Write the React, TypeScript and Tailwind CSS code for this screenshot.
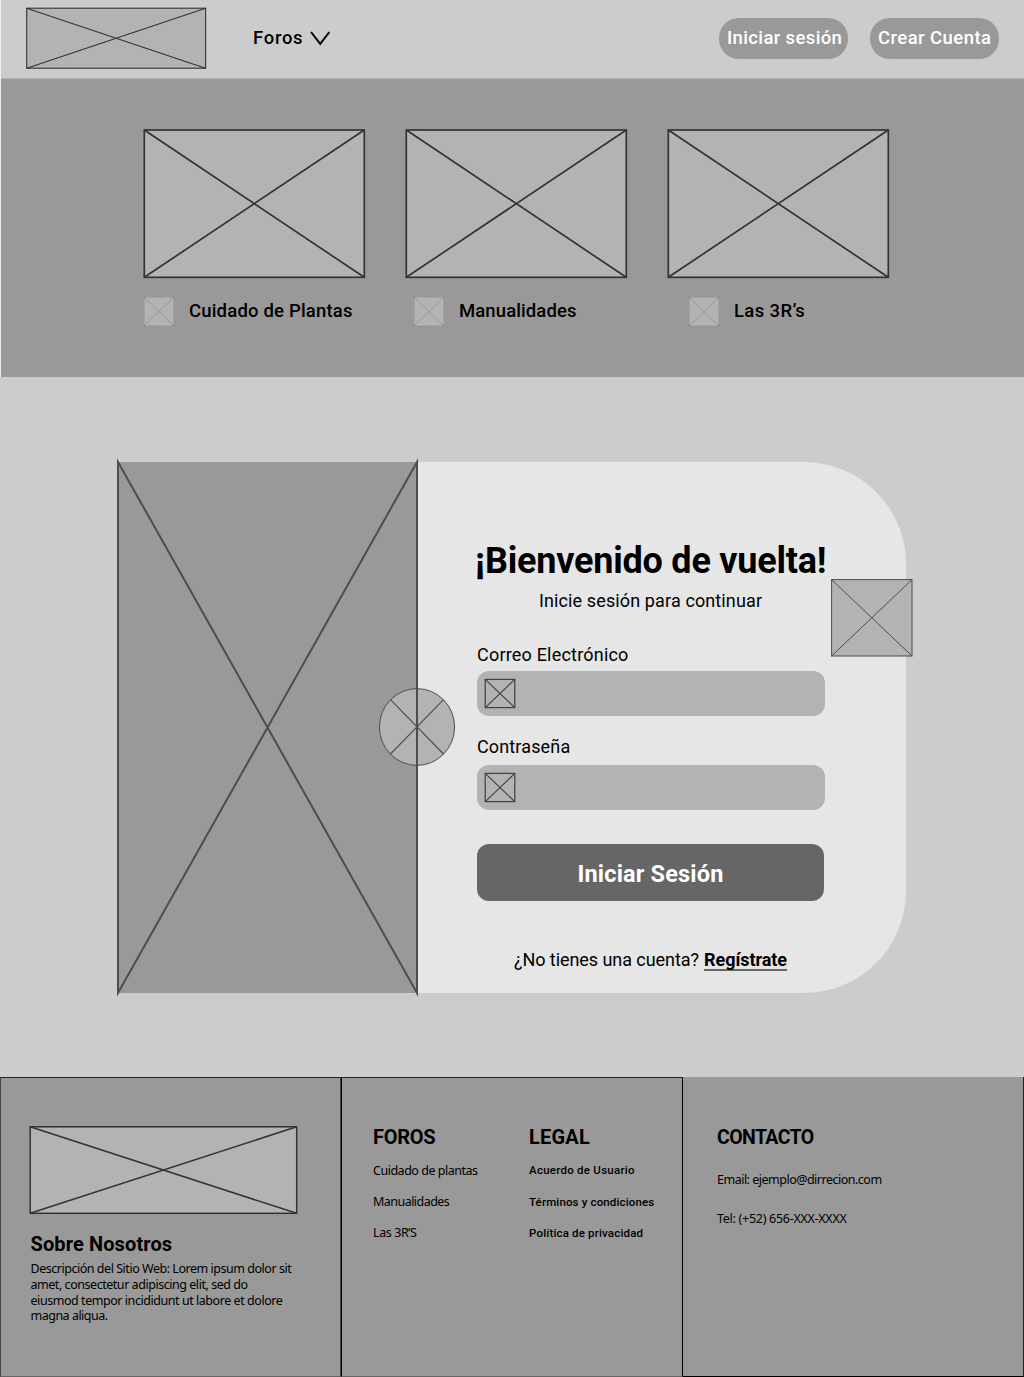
import React from 'react';

type PlaceholderProps = {
  w: number;
  h: number;
  /** Frame edges inside the drawing: left, top, right, bottom. */
  box: [number, number, number, number];
  stroke: string;
  sw: number;
  fill?: string;
  className?: string;
};

function Placeholder({ w, h, box, stroke, sw, fill = '#b3b3b3', className = '' }: PlaceholderProps) {
  const [l, t, r, b] = box;
  return (
    <svg width={w} height={h} viewBox={`0 0 ${w} ${h}`} className={`block shrink-0 ${className}`} aria-hidden="true">
      <rect x={l} y={t} width={r - l} height={b - t} fill={fill} stroke={stroke} strokeWidth={sw} />
      <path d={`M${l} ${t}L${r} ${b}M${r} ${t}L${l} ${b}`} stroke={stroke} strokeWidth={sw} fill="none" />
    </svg>
  );
}

function TopicIcon() {
  return (
    <svg width="30" height="29" viewBox="0 0 30 29" className="block shrink-0" aria-hidden="true">
      <rect width="30" height="29" fill="#b3b3b3" />
      <path d="M.5 .5H29.5V28.5H.5Z" fill="none" stroke="#858585" strokeWidth="0.3" />
      <path d="M.5 .5L29.5 28.5M29.5 .5L.5 28.5" stroke="#808080" strokeWidth="0.5" />
      <path d="M0 0h1v1H0ZM29 0h1v1h-1ZM0 28h1v1H0ZM29 28h1v1h-1Z" fill="#6c6c6c" />
    </svg>
  );
}

function Header() {
  return (
    <header className="flex h-[79px] items-start border-b border-[#b0b0b0] pl-[25px]">
      <Placeholder w={181} h={62} box={[0.7, 1.2, 179.6, 61.2]} stroke="#333333" sw={1.1} className="mt-[7px]" />
      <button className="ml-[46px] mt-[26px] flex h-6 items-start">
        <span className="w-[57px] text-left text-[18.5px] font-medium leading-6 tracking-[0.7px]">Foros</span>
        <svg width="22" height="16" viewBox="0 0 22 16" className="mt-[4px] block" fill="none" aria-hidden="true">
          <path d="M1 2L10.2 13.8L19.4 2" stroke="#000" strokeWidth="2" />
        </svg>
      </button>
      <div className="ml-auto mr-[25px] mt-[18px] flex gap-[22px] text-[18.5px] font-medium leading-6 text-white">
        <button className="flex h-[41px] w-[129px] items-start whitespace-nowrap rounded-[20px] bg-[#999999] pl-[8px] pt-[8px] tracking-[0.36px]">
          Iniciar sesión
        </button>
        <button className="flex h-[41px] w-[129px] items-start whitespace-nowrap rounded-[20px] bg-[#999999] pl-[8px] pt-[8px] tracking-[0.44px]">
          Crear Cuenta
        </button>
      </div>
    </header>
  );
}

function TopicCard() {
  return <Placeholder w={223} h={150} box={[1.3, 1, 221.3, 148.3]} stroke="#333333" sw={1.7} />;
}

function Topics() {
  return (
    <section className="h-[298px] bg-[#999999] pl-[142px] pt-[50px]">
      <div className="flex gap-[39px]">
        <TopicCard />
        <TopicCard />
        <TopicCard />
      </div>
      <div className="ml-px mt-[18px] flex whitespace-nowrap text-[18.5px] font-medium leading-6">
        <div className="flex w-[270px] gap-[15px]">
          <TopicIcon />
          <span className="mt-[2px] tracking-[0.18px]">Cuidado de Plantas</span>
        </div>
        <div className="flex w-[275px] gap-[15px]">
          <TopicIcon />
          <span className="mt-[2px] tracking-[0.1px]">Manualidades</span>
        </div>
        <div className="flex gap-[15px]">
          <TopicIcon />
          <span className="mt-[2px] tracking-[0.36px]">Las 3R’s</span>
        </div>
      </div>
    </section>
  );
}

function InputField() {
  return (
    <div className="flex h-[45px] w-[348px] rounded-[12px] bg-[#b3b3b3] pl-[7px] pt-[7px]">
      <Placeholder w={32} h={31} box={[1.2, 1.4, 30.8, 29.6]} stroke="#404040" sw={1.2} />
    </div>
  );
}

function LoginCard() {
  return (
    <section className="relative ml-[117px] mt-[85px] flex h-[531px] w-[789px]">
      <div className="w-[300px] shrink-0 bg-[#999999]" />
      <div className="h-[531px] flex-1 whitespace-nowrap rounded-r-[102px] bg-[#e6e6e6] pl-[60px] text-[18px] leading-6">
        <h1 className="ml-[-2px] pt-[77px] text-[36px] font-bold leading-[44px] tracking-[-0.22px]">
          ¡Bienvenido de vuelta!
        </h1>
        <p className="ml-[62px] mt-[6px] tracking-[0.12px]">Inicie sesión para continuar</p>
        <label className="mt-[30px] block tracking-[0.2px]">Correo Electrónico</label>
        <div className="mt-[4px]">
          <InputField />
        </div>
        <label className="mt-[19px] block tracking-[0.14px]">Contraseña</label>
        <div className="mt-[6px]">
          <InputField />
        </div>
        <button className="mt-[34px] block h-[57px] w-[347px] rounded-[12px] bg-[#666666] text-[23.5px] font-bold leading-[60px] tracking-[0.18px] text-white">
          Iniciar Sesión
        </button>
        <p className="ml-[37px] mt-[47px] flex">
          <span className="w-[190px] tracking-[-0.06px]">¿No tienes una cuenta?</span>
          <a className="h-[23px] border-b-2 border-[#666666] font-bold tracking-[-0.05px]">Regístrate</a>
        </p>
      </div>
      <svg
        width="344"
        height="542"
        viewBox="0 0 344 542"
        className="absolute left-[-2px] top-[-5px]"
        fill="none"
        stroke="#4d4d4d"
        aria-hidden="true"
      >
        <ellipse cx="302" cy="270" rx="37.6" ry="38.4" fill="#b3b3b3" strokeWidth="1" />
        <path d="M275.5 242.7L328.5 297M328.5 242.7L275.5 297" strokeWidth="1.1" />
        <path d="M3 5V536L302 5V536Z" strokeWidth="2" strokeMiterlimit="10" />
      </svg>
      <Placeholder
        w={83}
        h={79}
        box={[0.6, 0.6, 81, 77]}
        stroke="#4d4d4d"
        sw={1}
        className="absolute left-[714px] top-[117px]"
      />
    </section>
  );
}

function Footer() {
  return (
    <footer className="flex h-[300px] whitespace-nowrap bg-[#999999] font-['Noto_Sans',sans-serif] text-[12.5px] leading-4">
      <div className="w-[341px] border border-b-[#666666] border-l-[#444444] border-r-[#444444] border-t-[#222222] pl-[28px] pt-[48px]">
        <Placeholder w={269} h={89} box={[1.2, 0.8, 267.7, 87.3]} stroke="#333333" sw={1.5} />
        <h2 className="ml-[1.5px] mt-[17px] font-[Roboto,sans-serif] text-[20px] font-bold leading-6 tracking-[0.12px]">
          Sobre Nosotros
        </h2>
        <p className="ml-[1.5px] mt-[5px] leading-[15.75px]">
          <span className="block tracking-[-0.47px]">Descripción del Sitio Web: Lorem ipsum dolor sit</span>
          <span className="block tracking-[-0.46px]">amet, consectetur adipiscing elit, sed do</span>
          <span className="block tracking-[-0.45px]">eiusmod tempor incididunt ut labore et dolore</span>
          <span className="block tracking-[-0.5px]">magna aliqua.</span>
        </p>
      </div>
      <div className="flex w-[342px] border border-b-[#666666] border-l-black border-r-black border-t-[#222222] pl-[31px] pt-[47px]">
        <div className="w-[155px]">
          <h2 className="font-[Roboto,sans-serif] text-[20px] font-bold leading-6 tracking-[-0.25px]">FOROS</h2>
          <ul className="mt-[14px] flex flex-col gap-[15px]">
            <li className="tracking-[-0.48px]">Cuidado de plantas</li>
            <li className="tracking-[-0.53px]">Manualidades</li>
            <li className="tracking-[-0.4px]">Las 3R’S</li>
          </ul>
        </div>
        <div className="font-[Roboto,sans-serif] text-[11.5px] font-medium">
          <h2 className="ml-px text-[20px] font-bold leading-6 tracking-[0.2px]">LEGAL</h2>
          <ul className="ml-px mt-[13px] flex flex-col gap-[15.5px]">
            <li className="tracking-[0.26px]">Acuerdo de Usuario</li>
            <li className="tracking-[0.15px]">Términos y condiciones</li>
            <li className="tracking-[0.17px]">Política de privacidad</li>
          </ul>
        </div>
      </div>
      <div className="flex-1 border-b border-r border-b-black border-r-[#222222] pl-[34px] pt-[49px]">
        <h2 className="font-[Roboto,sans-serif] text-[19.5px] font-bold leading-6 tracking-[-0.6px]">CONTACTO</h2>
        <p className="mt-[22px] tracking-[-0.5px]">Email: ejemplo@dirrecion.com</p>
        <p className="mt-[23px] tracking-[-0.28px]">Tel: (+52) 656-XXX-XXXX</p>
      </div>
    </footer>
  );
}

export default function App() {
  return (
    <div className="h-[1377px] w-[1024px] overflow-hidden bg-[#cccccc] font-[Roboto,sans-serif] text-black">
      <div className="border-l border-[#f0f0f0]">
        <Header />
        <Topics />
      </div>
      <main className="h-[700px] overflow-hidden">
        <LoginCard />
      </main>
      <Footer />
    </div>
  );
}
